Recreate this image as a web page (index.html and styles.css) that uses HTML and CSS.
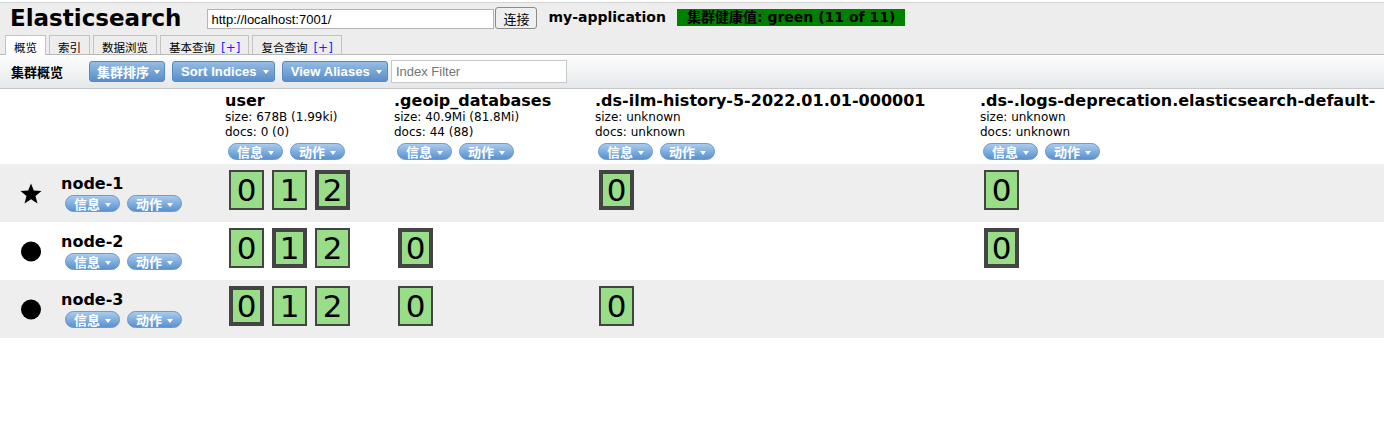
FILE: index.html
```html
<!DOCTYPE html>
<html lang="zh">
<head>
<meta charset="utf-8">
<title>Elasticsearch Head</title>
<link rel="stylesheet" href="styles.css">
</head>
<body>
<div class="header">
  <div class="hrow">
    <h1 class="title">Elasticsearch</h1>
    <input class="url" type="text" value="http://localhost:7001/">
    <button class="connect">连接</button>
    <span class="cluster">my-application</span>
    <span class="health">集群健康值: green (11 of 11)</span>
  </div>
  <div class="tabs">
    <div class="tab active">概览</div>
    <div class="tab">索引</div>
    <div class="tab">数据浏览</div>
    <div class="tab">基本查询<span class="plus">[+]</span></div>
    <div class="tab">复合查询<span class="plus">[+]</span></div>
  </div>
</div>
<div class="toolbar">
  <span class="tb-label">集群概览</span>
  <span class="tb-btn cjk">集群排序<i class="caret"></i></span>
  <span class="tb-btn">Sort Indices<i class="caret"></i></span>
  <span class="tb-btn last">View Aliases<i class="caret"></i></span>
  <input class="filter" type="text" placeholder="Index Filter">
</div>
<table class="nodes">
  <colgroup>
    <col class="c-node"><col class="c-user"><col class="c-geo"><col class="c-ilm"><col class="c-logs">
  </colgroup>
  <thead>
    <tr class="idx-row">
      <th></th>
      <th class="idx">
        <div class="idx-name">user</div>
        <div class="meta">size: 678B (1.99ki)</div>
        <div class="meta">docs: 0 (0)</div>
        <div class="pills idx-pills"><span class="pill">信息<i class="caret"></i></span><span class="pill">动作<i class="caret"></i></span></div>
      </th>
      <th class="idx">
        <div class="idx-name">.geoip_databases</div>
        <div class="meta">size: 40.9Mi (81.8Mi)</div>
        <div class="meta">docs: 44 (88)</div>
        <div class="pills idx-pills"><span class="pill">信息<i class="caret"></i></span><span class="pill">动作<i class="caret"></i></span></div>
      </th>
      <th class="idx">
        <div class="idx-name">.ds-ilm-history-5-2022.01.01-000001</div>
        <div class="meta">size: unknown</div>
        <div class="meta">docs: unknown</div>
        <div class="pills idx-pills"><span class="pill">信息<i class="caret"></i></span><span class="pill">动作<i class="caret"></i></span></div>
      </th>
      <th class="idx">
        <div class="idx-name">.ds-.logs-deprecation.elasticsearch-default-</div>
        <div class="meta">size: unknown</div>
        <div class="meta">docs: unknown</div>
        <div class="pills idx-pills"><span class="pill">信息<i class="caret"></i></span><span class="pill">动作<i class="caret"></i></span></div>
      </th>
    </tr>
  </thead>
  <tbody>
    <tr class="node-row alt">
      <td class="node-cell">
        <div class="node">
          <div class="node-icon"><svg width="22" height="21" viewBox="0 0 22 21"><polygon points="11,0.5 13.8,7.6 21.5,8.1 15.5,13 17.5,20.4 11,16.3 4.5,20.4 6.5,13 0.5,8.1 8.2,7.6" fill="#000"/></svg></div>
          <div class="node-info">
            <div class="node-name">node-1</div>
            <div class="pills node-pills"><span class="pill">信息<i class="caret"></i></span><span class="pill">动作<i class="caret"></i></span></div>
          </div>
        </div>
      </td>
      <td class="sh-cell"><div class="shards"><div class="shard">0</div><div class="shard">1</div><div class="shard primary">2</div></div></td>
      <td class="sh-cell"></td>
      <td class="sh-cell"><div class="shards"><div class="shard primary">0</div></div></td>
      <td class="sh-cell"><div class="shards"><div class="shard">0</div></div></td>
    </tr>
    <tr class="node-row">
      <td class="node-cell">
        <div class="node">
          <div class="node-icon"><svg width="22" height="21" viewBox="0 0 22 21"><circle cx="11" cy="10.5" r="10" fill="#000"/></svg></div>
          <div class="node-info">
            <div class="node-name">node-2</div>
            <div class="pills node-pills"><span class="pill">信息<i class="caret"></i></span><span class="pill">动作<i class="caret"></i></span></div>
          </div>
        </div>
      </td>
      <td class="sh-cell"><div class="shards"><div class="shard">0</div><div class="shard primary">1</div><div class="shard">2</div></div></td>
      <td class="sh-cell"><div class="shards"><div class="shard primary">0</div></div></td>
      <td class="sh-cell"></td>
      <td class="sh-cell"><div class="shards"><div class="shard primary">0</div></div></td>
    </tr>
    <tr class="node-row alt">
      <td class="node-cell">
        <div class="node">
          <div class="node-icon"><svg width="22" height="21" viewBox="0 0 22 21"><circle cx="11" cy="10.5" r="10" fill="#000"/></svg></div>
          <div class="node-info">
            <div class="node-name">node-3</div>
            <div class="pills node-pills"><span class="pill">信息<i class="caret"></i></span><span class="pill">动作<i class="caret"></i></span></div>
          </div>
        </div>
      </td>
      <td class="sh-cell"><div class="shards"><div class="shard primary">0</div><div class="shard">1</div><div class="shard">2</div></div></td>
      <td class="sh-cell"><div class="shards"><div class="shard">0</div></div></td>
      <td class="sh-cell"><div class="shards"><div class="shard">0</div></div></td>
      <td class="sh-cell"></td>
    </tr>
  </tbody>
</table>
</body>
</html>
```

FILE: styles.css
```css
html, body {
  margin: 0;
  padding: 0;
  overflow: hidden;
  background: #fff;
}
body {
  font-family: "DejaVu Sans", "Noto Sans CJK SC", sans-serif;
  font-size: 12px;
  color: #000;
}

/* ---------- header ---------- */
.header {
  margin-top: 2px;
  border-top: 1px solid #d4d4d4;
  background: #ededed;
}
.hrow {
  display: flex;
  align-items: flex-start;
  height: 32px;
}
.title {
  margin: 0 0 0 10px;
  font-family: "DejaVu Sans", sans-serif;
  font-size: 23px;
  line-height: 30px;
  font-weight: bold;
}
.url {
  margin: 6px 0 0 26px;
  width: 287px;
  height: 20px;
  box-sizing: border-box;
  border: 1px solid #b4b4b4;
  padding: 0 3px;
  font-family: "Liberation Sans", sans-serif;
  font-size: 13px;
  color: #000;
  background: #fff;
  outline: none;
}
.connect {
  margin: 4px 0 0 1px;
  width: 42px;
  height: 22px;
  padding: 0;
  box-sizing: border-box;
  border: 1px solid #8a8a8a;
  border-radius: 3px;
  background: #efefef;
  font-family: "Noto Sans CJK SC", sans-serif;
  font-size: 13px;
  color: #000;
}
.cluster {
  margin: 4px 0 0 11px;
  font-family: "DejaVu Sans", sans-serif;
  font-size: 14px;
  line-height: 20px;
  font-weight: bold;
}
.health {
  margin: 6px 0 0 11px;
  padding: 0 10px;
  height: 17px;
  background: #008000;
  font-family: "DejaVu Sans", "Noto Sans CJK SC", sans-serif;
  font-size: 14px;
  line-height: 17px;
  font-weight: bold;
  color: #000;
}

/* ---------- tabs ---------- */
.tabs {
  display: flex;
  align-items: flex-start;
  gap: 3px;
  padding-left: 5px;
  height: 19px;
  border-bottom: 1px solid #b9b9b9;
}
.tab {
  box-sizing: border-box;
  height: 19px;
  padding: 4px 8px 0;
  border: 1px solid #c3c3c3;
  border-bottom: none;
  background: #ededed;
  font-family: "Noto Sans CJK SC", sans-serif;
  font-size: 11.5px;
  line-height: 14px;
  color: #000;
  white-space: nowrap;
}
.tab.active {
  height: 20px;
  background: #fff;
}
.plus {
  margin-left: 6px;
  font-family: "DejaVu Sans", sans-serif;
  font-size: 12px;
  color: #1c1cff;
}

/* ---------- toolbar ---------- */
.toolbar {
  display: flex;
  align-items: center;
  height: 33px;
  padding-left: 11px;
  background: linear-gradient(#fdfefe, #e5e8eb);
  border-bottom: 1px solid #c6c6c6;
}
.tb-label {
  width: 78px;
  font-family: "Noto Sans CJK SC", sans-serif;
  font-size: 13px;
  font-weight: bold;
}
.tb-btn {
  display: flex;
  align-items: center;
  box-sizing: border-box;
  height: 21px;
  padding: 0 5px 0 8px;
  margin-right: 7px;
  border: 1px solid #5b89bd;
  border-radius: 3px;
  background: linear-gradient(#94bce5, #5a8ec6);
  color: #fff;
  font-family: "Liberation Sans", "Noto Sans CJK SC", sans-serif;
  font-size: 13px;
  font-weight: bold;
  letter-spacing: 0.1px;
  white-space: nowrap;
}
.tb-btn.cjk {
  padding: 0 4px 0 7px;
  letter-spacing: 0;
}
.tb-btn.last {
  margin-right: 3px;
}
.caret {
  display: inline-block;
  width: 0;
  height: 0;
  margin-left: 5px;
  border-left: 3.5px solid transparent;
  border-right: 3.5px solid transparent;
  border-top: 4px solid #fff;
}
.tb-btn .caret {
  margin-left: 6px;
}
.tb-btn.cjk .caret {
  margin-left: 5px;
}
.filter {
  box-sizing: border-box;
  width: 176px;
  height: 23px;
  padding: 0 4px;
  border: 1px solid #c8c8c8;
  background: #fff;
  font-family: "Liberation Sans", sans-serif;
  font-size: 13px;
  outline: none;
}
.filter::placeholder {
  color: #757575;
}

/* ---------- nodes table ---------- */
.nodes {
  border-collapse: collapse;
  table-layout: fixed;
  width: 1600px;
}
.c-node { width: 225px; }
.c-user { width: 169px; }
.c-geo { width: 201px; }
.c-ilm { width: 385px; }
.c-logs { width: 620px; }
.nodes th, .nodes td {
  padding: 0;
  text-align: left;
  vertical-align: top;
  font-weight: normal;
}
.idx-row { height: 75px; }
.nodes th.idx { padding-top: 3px; }
.idx-name {
  font-size: 16px;
  line-height: 18px;
  font-weight: bold;
  white-space: nowrap;
}
.meta {
  font-size: 12px;
  line-height: 15px;
  white-space: nowrap;
}
.pills {
  display: flex;
  gap: 7px;
}
.idx-pills {
  margin: 3px 0 0 3px;
}
.node-pills {
  margin: 2px 0 0 4px;
}
.pill {
  display: flex;
  align-items: flex-start;
  box-sizing: border-box;
  width: 55px;
  height: 17px;
  padding: 1px 0 0 8px;
  border: 1px solid #6c9bd0;
  border-radius: 9px;
  background: linear-gradient(#aacbee, #5a91cd);
  color: #fff;
  font-family: "Noto Sans CJK SC", sans-serif;
  font-size: 13px;
  line-height: 14px;
  font-weight: bold;
  white-space: nowrap;
}
.pill .caret {
  margin-top: 6px;
}

.node-row { height: 58px; }
.node-row.alt { background: #eeeeee; }
.nodes td.node-cell { vertical-align: middle; }
.node {
  display: flex;
  align-items: center;
}
.node-icon {
  width: 61px;
  display: flex;
  justify-content: center;
}
.node-icon svg { display: block; }
.node-name {
  font-size: 16px;
  line-height: 18px;
  font-weight: bold;
}
.nodes td.sh-cell { padding-top: 2px; }
.shards {
  display: flex;
}
.shard {
  box-sizing: border-box;
  width: 35px;
  height: 40px;
  margin: 4px;
  border: 2px solid #444;
  background: #99dd88;
  display: flex;
  align-items: center;
  justify-content: center;
  font-family: "DejaVu Sans", sans-serif;
  font-size: 31px;
  line-height: 1;
  color: #000;
}
.shard.primary {
  border-width: 4px;
}
```
